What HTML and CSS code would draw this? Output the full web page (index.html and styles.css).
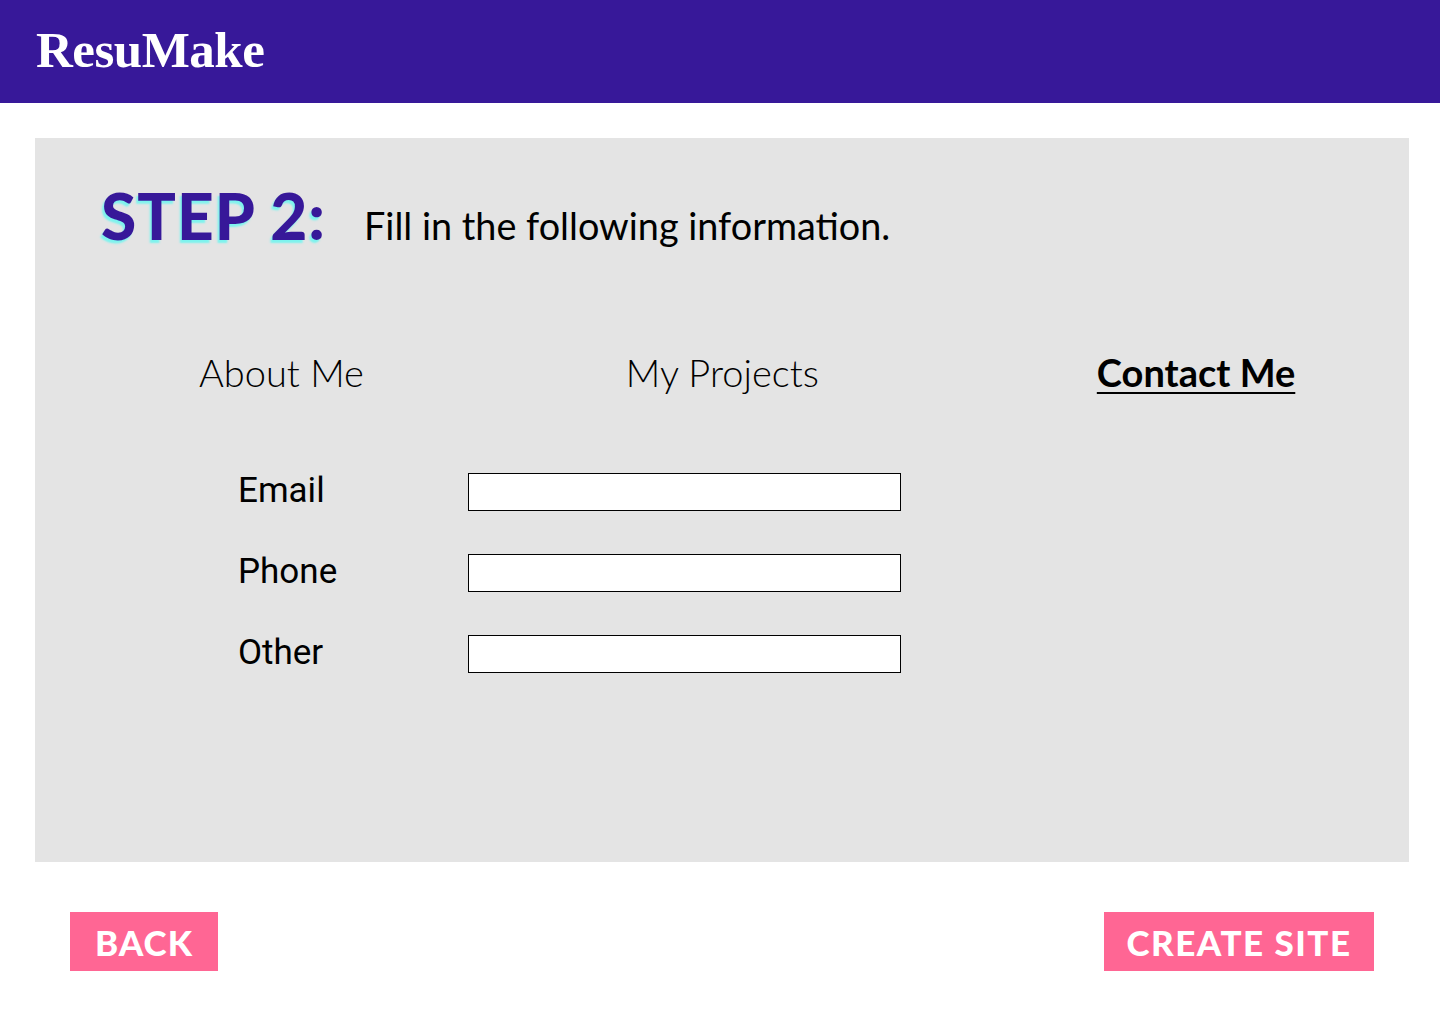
FILE: index.html
```html
<!DOCTYPE html>
<html>
<head>
<meta charset="utf-8">
<link rel="stylesheet" href="styles.css">
</head>
<body>
<header class="topbar">
  <div class="logo">ResuMake</div>
</header>
<main class="panel">
  <div class="step">
    <h1 class="step-title">STEP 2:</h1>
    <p class="step-text">Fill in the following information.</p>
  </div>
  <nav class="tabs">
    <span class="tab tab-about">About Me</span>
    <span class="tab tab-projects">My Projects</span>
    <span class="tab tab-contact active">Contact Me</span>
  </nav>
  <form class="fields">
    <div class="row"><label class="label">Email</label><input class="field" type="text"></div>
    <div class="row"><label class="label">Phone</label><input class="field" type="text"></div>
    <div class="row"><label class="label">Other</label><input class="field" type="text"></div>
  </form>
</main>
<footer class="actions">
  <button class="btn btn-back">BACK</button>
  <button class="btn btn-create">CREATE SITE</button>
</footer>
</body>
</html>
```
FILE: styles.css
```css
* { box-sizing: border-box; }
html, body { margin: 0; padding: 0; background: #ffffff; }
body { width: 1440px; height: 1024px; font-family: "Lato", "Liberation Sans", sans-serif; }

.topbar {
  height: 103px;
  background: #371899;
  display: flex;
  align-items: center;
  padding-left: 36px;
}
.logo {
  font-family: "Liberation Serif", "DejaVu Serif", serif;
  font-weight: 700;
  font-size: 51px;
  color: #ffffff;
  letter-spacing: -0.5px;
  margin-top: -4px;
}

.panel {
  margin: 35px 31px 0 35px;
  height: 724px;
  background: #e4e4e4;
  display: flex;
  flex-direction: column;
}

.step {
  display: flex;
  align-items: baseline;
  padding: 46px 0 0 66px;
  height: 172px;
}
.step-title {
  margin: 0;
  font-family: "Lato", sans-serif;
  font-weight: 900;
  font-size: 64px;
  color: #371899;
  text-shadow: -2px 3px 2px #7df3ee;
  letter-spacing: 1px;
  line-height: 1;
}
.step-text {
  margin: 0 0 0 38px;
  font-family: "Lato", sans-serif;
  font-size: 37.8px;
  color: #000;
  line-height: 1;
}

.tabs {
  display: flex;
  align-items: baseline;
  height: 128px;
  padding-top: 43px;
  font-size: 38px;
  line-height: 1;
  color: #000;
}
.tab { font-family: "Lato", sans-serif; font-weight: 300; }
.tab-about { margin-left: 164px; }
.tab-projects { margin-left: 262px; }
.tab-contact { margin-left: 278px; }
.active { font-weight: 700; text-decoration: underline; text-underline-offset: 5px; text-decoration-thickness: 2px; }

.fields {
  display: flex;
  flex-direction: column;
  gap: 43px;
  padding-left: 203px;
  margin: 35px 0 0 0;
}
.row {
  display: flex;
  align-items: center;
  height: 38px;
}
.label {
  width: 230px;
  font-family: "Roboto", sans-serif;
  font-size: 35px;
  color: #000;
  margin-top: -4px;
}
.field {
  width: 433px;
  height: 38px;
  border: 1px solid #000;
  background: #fff;
  border-radius: 0;
  margin: 0;
  padding: 0;
}

.actions {
  display: flex;
  justify-content: space-between;
  padding: 50px 66px 0 70px;
}
.btn {
  height: 59px;
  border: none;
  background: #ff6694;
  color: #fff;
  font-family: "Lato", sans-serif;
  font-weight: 900;
  font-size: 35px;
  letter-spacing: 1px;
  padding: 0;
  cursor: pointer;
}
.btn-back { width: 148px; }
.btn-create { width: 270px; letter-spacing: 1.5px; }
```
